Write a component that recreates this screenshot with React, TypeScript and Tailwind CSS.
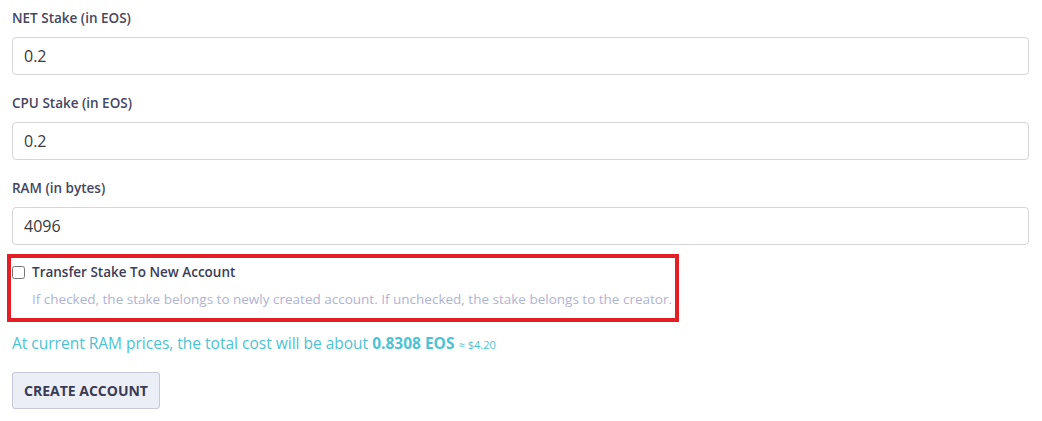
import { useState } from "react";

const fields = [
  { label: "NET Stake (in EOS)", value: "0.2" },
  { label: "CPU Stake (in EOS)", value: "0.2" },
  { label: "RAM (in bytes)", value: "4096" },
];

export default function App() {
  const [transfer, setTransfer] = useState(false);

  return (
    <div className="w-[1042px] h-[421px] bg-white px-3 pt-[9px] font-['Open_Sans',sans-serif]">
      <div className="flex flex-col gap-[19px]">
        {fields.map((f) => (
          <div key={f.label}>
            <label className="block text-[13.5px] font-semibold text-[#44465f] leading-[18px] mb-[10px]">
              {f.label}
            </label>
            <input
              className="block w-[1017px] h-[38px] px-[11px] text-[16px] text-[#3a3a3a] border border-[#d6d6d6] rounded-[4px] outline-none"
              defaultValue={f.value}
            />
          </div>
        ))}
      </div>

      {/* highlighted option */}
      <div className="ml-[-5px] mt-[9px] w-[672px] h-[68px] border-4 border-[#e31e24] pl-[1px] pt-[4px]">
        <label className="flex items-center gap-[7px] text-[13.5px] font-semibold text-[#3b3d58]">
          <input
            type="checkbox"
            className="w-[13px] h-[13px] m-0"
            checked={transfer}
            onChange={(e) => setTransfer(e.target.checked)}
          />
          Transfer Stake To New Account
        </label>
        <p className="ml-[20px] mt-[7px] text-[13.5px] text-[#b0b3d4] whitespace-nowrap">
          If checked, the stake belongs to newly created account. If unchecked, the stake belongs to the creator.
        </p>
      </div>

      <p className="mt-[10px] text-[15.5px] text-[#4cc3d3] leading-[22px]">
        At current RAM prices, the total cost will be about <span className="font-bold">0.8308 EOS</span>{" "}
        <span className="text-[11px]">≈ $4.20</span>
      </p>

      <button className="mt-[16px] h-[37px] px-[11px] bg-[#eceef5] border border-[#c6c8d8] rounded-[3px] text-[14px] font-bold text-[#3a3b55]">
        CREATE ACCOUNT
      </button>
    </div>
  );
}
